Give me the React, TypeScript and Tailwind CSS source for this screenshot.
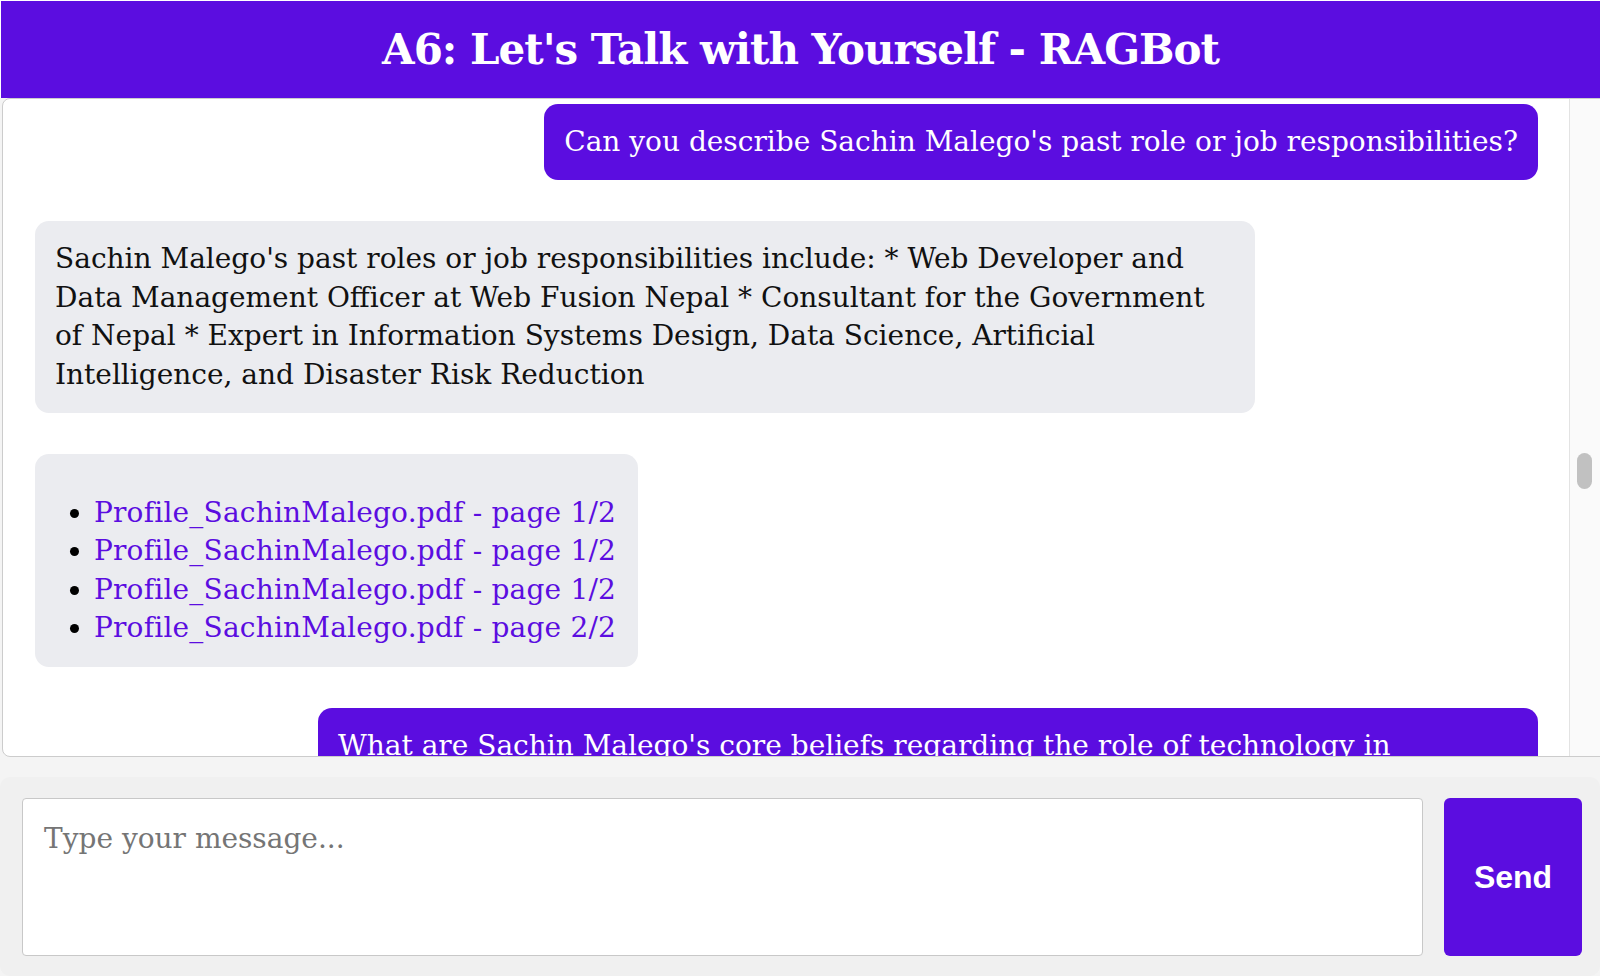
const serif = "font-['DejaVu_Serif',serif]";

const messages = [
  { from: 'user', text: "Can you describe Sachin Malego's past role or job responsibilities?" },
  {
    from: 'bot',
    text: "Sachin Malego's past roles or job responsibilities include: * Web Developer and Data Management Officer at Web Fusion Nepal * Consultant for the Government of Nepal * Expert in Information Systems Design, Data Science, Artificial Intelligence, and Disaster Risk Reduction",
  },
];

const sources = [
  'Profile_SachinMalego.pdf - page 1/2',
  'Profile_SachinMalego.pdf - page 1/2',
  'Profile_SachinMalego.pdf - page 1/2',
  'Profile_SachinMalego.pdf - page 2/2',
];

export default function App() {
  return (
    <div className={`h-[976px] w-[1600px] overflow-hidden bg-[#f4f4f4] flex flex-col ${serif}`}>
      {/* Header */}
      <div className="bg-white pt-[1px] pl-[1px]">
        <header className="h-[97px] bg-[#5b0de0] flex items-center justify-center">
          <h1 className="text-white font-bold text-[42px] tracking-[-1px] leading-none">
            A6: Let's Talk with Yourself - RAGBot
          </h1>
        </header>
      </div>

      {/* Chat box */}
      <div className="ml-[2px] h-[659px] border border-[#cccccc] rounded-lg bg-white flex overflow-hidden -mr-[10px]">
        <div className="flex-1 flex flex-col gap-[41px] pt-[5px] pl-[32px] pr-[31px] overflow-hidden text-[28px] leading-[38.4px]">
          {messages.map((m, i) =>
            m.from === 'user' ? (
              <div key={i} className="self-end max-w-[1220px] bg-[#5b0de0] text-white rounded-[14px] px-[20px] py-[19px]">
                {m.text}
              </div>
            ) : (
              <div key={i} className="self-start max-w-[1220px] bg-[#ebecf0] text-[#111111] rounded-[14px] px-[20px] py-[19px]">
                {m.text}
              </div>
            )
          )}
          <div className="self-start bg-[#ebecf0] rounded-[14px] pl-[20px] pr-[22px] pt-[40px] pb-[19px]">
            <ul className="list-disc pl-[39px] text-black">
              {sources.map((s, i) => (
                <li key={i}>
                  <a href="#" className="text-[#5b0de0] tracking-[0.2px]">{s}</a>
                </li>
              ))}
            </ul>
          </div>
          <div className="self-end w-[1220px] bg-[#5b0de0] text-white rounded-[14px] px-[20px] py-[19px] shrink-0">
            What are Sachin Malego's core beliefs regarding the role of technology in
            <br />
            shaping society and how has it influenced his work?
          </div>
        </div>
        {/* Scrollbar */}
        <div className="w-[40px] shrink-0 bg-[#fafafa] border-l border-[#e3e3e3] pt-[354px] pl-[7px]">
          <div className="w-[15px] h-[36px] rounded-full bg-[#c1c1c1]" />
        </div>
      </div>

      {/* Input */}
      <div className="mt-[20px] flex-1 bg-[#f0f0f0] rounded-[10px] pl-[22px] pr-[18px] pt-[21px] pb-[20px] flex gap-[21px]">
        <textarea
          placeholder="Type your message..."
          className={`flex-1 h-[158px] resize-none bg-white border border-[#c8c8c8] rounded-[4px] px-[21px] pt-[21px] pb-[15px] text-[28px] leading-[38.4px] placeholder:text-[#757575] outline-none ${serif}`}
        />
        <button className="w-[138px] h-[158px] bg-[#5b0de0] rounded-[6px] text-white font-bold text-[32px] font-['Liberation_Sans',Arial,sans-serif]">
          Send
        </button>
      </div>
    </div>
  );
}
